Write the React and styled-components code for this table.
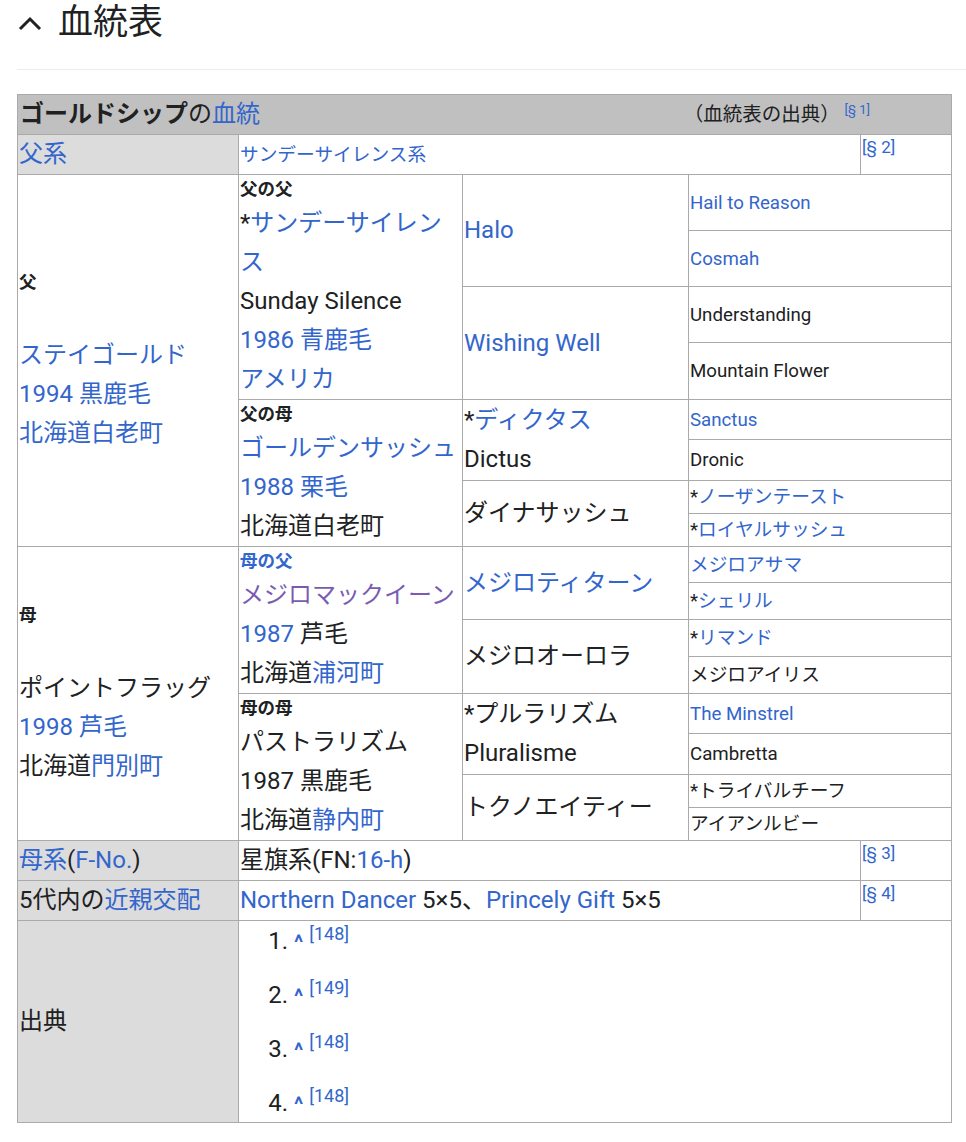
import React from "react";
import styled, { createGlobalStyle } from "styled-components";

const Global = createGlobalStyle`
  html, body { margin: 0; padding: 0; background: #fff; }
  body {
    font-family: Roboto, "Noto Sans CJK JP", "Noto Sans", sans-serif;
    color: #202122;
  }
`;

const LINK = "#3366cc";
const VISITED = "#795cb2";

const Page = styled.div`
  padding-left: 17px;
  padding-bottom: 20px;
`;

const SectionHeader = styled.div`
  display: flex;
  align-items: center;
  gap: 16px;
  height: 45px;
  padding-bottom: 24px;
  border-bottom: 1px solid #eaecf0;
  margin-bottom: 24px;
`;

const Chevron = styled.svg`
  width: 24px;
  height: 24px;
  flex: none;
  margin-left: 1px;
`;

const H2 = styled.h2`
  margin: 0;
  font-size: 35px;
  font-weight: 400;
  line-height: 45px;
`;

const Grid = styled.div`
  display: grid;
  grid-template-columns: 220px 223px 225px 171px 90px;
  grid-template-rows: 39px 39px 55px 55px 55px 56px 39px 40px 32px 32px 35px 36px 36px 36px 39px 40px 32px 32px 39px 39px 201px;
  gap: 1px;
  padding: 1px;
  width: max-content;
  background: #aaaaaa;
`;

const Cell = styled.div`
  grid-row: ${(p) => p.$r} / span ${(p) => p.$rs || 1};
  grid-column: ${(p) => p.$c} / span ${(p) => p.$cs || 1};
  background: ${(p) => p.$bg || "#fff"};
  display: flex;
  flex-direction: column;
  justify-content: ${(p) => (p.$top ? "flex-start" : "center")};
  padding: 0 1px;
  min-width: 0;
  overflow: hidden;
`;

const HeadCell = styled(Cell)`
  flex-direction: row;
  align-items: center;
  justify-content: space-between;
  padding: 0 81px 0 2px;
`;

const Title = styled.div`
  font-size: 24px;
  line-height: 39px;
`;

const Strong = styled.b`
  font-weight: 700;
`;

const Source = styled.div`
  font-size: 19.5px;
  line-height: 39px;
`;

const Sup = styled.sup`
  font-size: ${(p) => p.$size || 13}px;
  line-height: 0;
  color: ${LINK};
  vertical-align: 7px;
`;

const A = styled.span`
  color: ${(p) => (p.$visited ? VISITED : LINK)};
`;

const Big = styled.div`
  font-size: 24px;
  line-height: 39px;
`;

const Label = styled.div`
  font-size: 17.5px;
  font-weight: 700;
  line-height: 28.5px;
`;

const Blank = styled.div`
  height: 39px;
`;

const Small = styled.div`
  font-size: 18.7px;
  line-height: 28px;
  white-space: nowrap;
`;

const Ref = styled.div`
  font-size: 17px;
  line-height: 24px;
  color: ${LINK};
`;

const RefList = styled.ol`
  margin: 0;
  padding: 0 0 0 54px;
  font-size: 24px;
`;

const RefItem = styled.li`
  line-height: 40px;
  height: 40px;
  margin-bottom: 14px;
  &:last-child { margin-bottom: 0; }
`;

const Caret = styled.span`
  color: ${LINK};
  font-weight: 700;
  font-size: 21px;
  line-height: 0;
`;

const RefSup = styled.sup`
  font-size: 18px;
  line-height: 0;
  color: ${LINK};
  vertical-align: 9px;
`;

const GRAY = "#dcdcdc";
const HEAD = "#c0c0c0";

function G4({ r, children }) {
  return (
    <Cell $r={r} $c={4} $cs={2}>
      <Small>{children}</Small>
    </Cell>
  );
}

export default function App() {
  return (
    <Page>
      <Global />
      <SectionHeader>
        <Chevron viewBox="0 0 24 24" fill="none" stroke="#202122" strokeWidth="3" strokeLinecap="butt" strokeLinejoin="miter">
          <path d="M2 18 L12 8 L22 18" />
        </Chevron>
        <H2>血統表</H2>
      </SectionHeader>

      <Grid>
        <HeadCell $r={1} $c={1} $cs={5} $bg={HEAD}>
          <Title>
            <Strong>ゴールドシップ</Strong>の<A>血統</A>
          </Title>
          <Source>
            （血統表の出典） <Sup>[§ 1]</Sup>
          </Source>
        </HeadCell>

        <Cell $r={2} $c={1} $bg={GRAY}>
          <Big><A>父系</A></Big>
        </Cell>
        <Cell $r={2} $c={2} $cs={3}>
          <Small><A>サンデーサイレンス系</A></Small>
        </Cell>
        <Cell $r={2} $c={5} $top>
          <Ref>[§ 2]</Ref>
        </Cell>

        {/* Sire side */}
        <Cell $r={3} $rs={8} $c={1}>
          <Label>父</Label>
          <Blank />
          <Big><A>ステイゴールド</A></Big>
          <Big><A>1994 黒鹿毛</A></Big>
          <Big><A>北海道白老町</A></Big>
        </Cell>
        <Cell $r={3} $rs={4} $c={2}>
          <Label>父の父</Label>
          <Big>*<A>サンデーサイレンス</A></Big>
          <Big>Sunday Silence</Big>
          <Big><A>1986 青鹿毛</A></Big>
          <Big><A>アメリカ</A></Big>
        </Cell>
        <Cell $r={3} $rs={2} $c={3}>
          <Big><A>Halo</A></Big>
        </Cell>
        <Cell $r={5} $rs={2} $c={3}>
          <Big><A>Wishing Well</A></Big>
        </Cell>
        <G4 r={3}><A>Hail to Reason</A></G4>
        <G4 r={4}><A>Cosmah</A></G4>
        <G4 r={5}>Understanding</G4>
        <G4 r={6}>Mountain Flower</G4>

        <Cell $r={7} $rs={4} $c={2}>
          <Label>父の母</Label>
          <Big><A>ゴールデンサッシュ</A></Big>
          <Big><A>1988 栗毛</A></Big>
          <Big>北海道白老町</Big>
        </Cell>
        <Cell $r={7} $rs={2} $c={3}>
          <Big>*<A>ディクタス</A></Big>
          <Big>Dictus</Big>
        </Cell>
        <Cell $r={9} $rs={2} $c={3}>
          <Big>ダイナサッシュ</Big>
        </Cell>
        <G4 r={7}><A>Sanctus</A></G4>
        <G4 r={8}>Dronic</G4>
        <G4 r={9}>*<A>ノーザンテースト</A></G4>
        <G4 r={10}>*<A>ロイヤルサッシュ</A></G4>

        {/* Dam side */}
        <Cell $r={11} $rs={8} $c={1}>
          <Label>母</Label>
          <Blank />
          <Big>ポイントフラッグ</Big>
          <Big><A>1998 芦毛</A></Big>
          <Big>北海道<A>門別町</A></Big>
        </Cell>
        <Cell $r={11} $rs={4} $c={2}>
          <Label><A>母の父</A></Label>
          <Big><A $visited>メジロマックイーン</A></Big>
          <Big><A>1987</A> 芦毛</Big>
          <Big>北海道<A>浦河町</A></Big>
        </Cell>
        <Cell $r={11} $rs={2} $c={3}>
          <Big><A>メジロティターン</A></Big>
        </Cell>
        <Cell $r={13} $rs={2} $c={3}>
          <Big>メジロオーロラ</Big>
        </Cell>
        <G4 r={11}><A>メジロアサマ</A></G4>
        <G4 r={12}>*<A>シェリル</A></G4>
        <G4 r={13}>*<A>リマンド</A></G4>
        <G4 r={14}>メジロアイリス</G4>

        <Cell $r={15} $rs={4} $c={2}>
          <Label>母の母</Label>
          <Big>パストラリズム</Big>
          <Big>1987 黒鹿毛</Big>
          <Big>北海道<A>静内町</A></Big>
        </Cell>
        <Cell $r={15} $rs={2} $c={3}>
          <Big>*プルラリズム</Big>
          <Big>Pluralisme</Big>
        </Cell>
        <Cell $r={17} $rs={2} $c={3}>
          <Big>トクノエイティー</Big>
        </Cell>
        <G4 r={15}><A>The Minstrel</A></G4>
        <G4 r={16}>Cambretta</G4>
        <G4 r={17}>*トライバルチーフ</G4>
        <G4 r={18}>アイアンルビー</G4>

        {/* Footer rows */}
        <Cell $r={19} $c={1} $bg={GRAY}>
          <Big><A>母系</A>(<A>F-No.</A>)</Big>
        </Cell>
        <Cell $r={19} $c={2} $cs={3}>
          <Big>星旗系(FN:<A>16-h</A>)</Big>
        </Cell>
        <Cell $r={19} $c={5} $top>
          <Ref>[§ 3]</Ref>
        </Cell>

        <Cell $r={20} $c={1} $bg={GRAY}>
          <Big>5代内の<A>近親交配</A></Big>
        </Cell>
        <Cell $r={20} $c={2} $cs={3}>
          <Big><A>Northern Dancer</A> 5×5、<A>Princely Gift</A> 5×5</Big>
        </Cell>
        <Cell $r={20} $c={5} $top>
          <Ref>[§ 4]</Ref>
        </Cell>

        <Cell $r={21} $c={1} $bg={GRAY}>
          <Big>出典</Big>
        </Cell>
        <Cell $r={21} $c={2} $cs={4}>
          <RefList>
            {["148", "149", "148", "148"].map((n, i) => (
              <RefItem key={i}>
                <Caret>^</Caret> <RefSup>[{n}]</RefSup>
              </RefItem>
            ))}
          </RefList>
        </Cell>
      </Grid>
    </Page>
  );
}
